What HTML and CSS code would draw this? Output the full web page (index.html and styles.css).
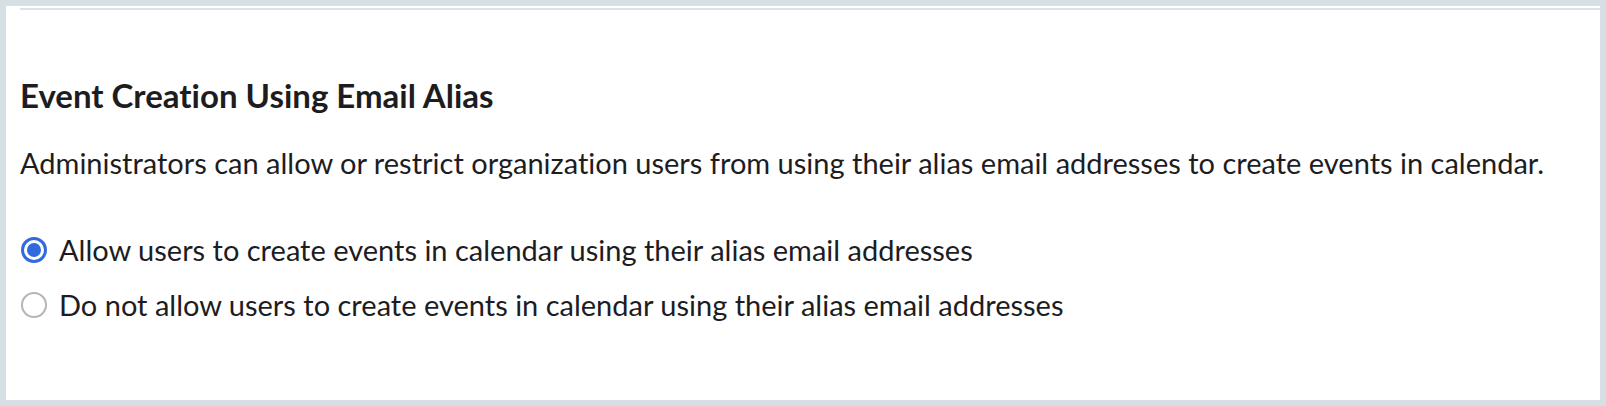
FILE: index.html
```html
<!DOCTYPE html>
<html lang="en">
<head>
<meta charset="utf-8">
<title>Event Creation Using Email Alias</title>
<link rel="stylesheet" href="styles.css">
</head>
<body>
<div class="frame">
  <section class="panel">
    <div class="divider"></div>
    <h2 class="title">Event Creation Using Email Alias</h2>
    <p class="desc">Administrators can allow or restrict organization users from using their alias email addresses to create events in calendar.</p>
    <div class="options">
      <label class="option">
        <input type="radio" name="alias" checked>
        <span class="radio"></span>
        <span class="label">Allow users to create events in calendar using their alias email addresses</span>
      </label>
      <label class="option">
        <input type="radio" name="alias">
        <span class="radio"></span>
        <span class="label">Do not allow users to create events in calendar using their alias email addresses</span>
      </label>
    </div>
  </section>
</div>
</body>
</html>
```

FILE: styles.css
```css
* { box-sizing: border-box; }

html, body {
  margin: 0;
  padding: 0;
  background: #d6dfe3;
}

body {
  font-family: Lato, "Noto Sans", sans-serif;
  font-variant-ligatures: none;
  color: #1d1d1f;
}

.frame {
  width: 1606px;
  height: 406px;
  padding: 6px;
}

.panel {
  background: #ffffff;
  height: 100%;
  padding: 2px 0 0 14px;
}

.divider {
  height: 2px;
  background: #dfe2e5;
}

.title {
  margin: 65px 0 0 0;
  font-size: 33px;
  font-weight: 700;
  line-height: 40px;
}

.desc {
  margin: 30px 0 0 0;
  font-size: 29px;
  line-height: 36px;
}

.options {
  margin-top: 51px;
  display: flex;
  flex-direction: column;
  gap: 19px;
}

.option {
  display: flex;
  align-items: center;
  gap: 12px;
  padding-left: 1px;
  font-size: 29px;
  line-height: 36px;
  cursor: pointer;
}

.option input {
  display: none;
}

.radio {
  width: 26px;
  height: 26px;
  border-radius: 50%;
  border: 2px solid #b3b5b8;
  background: #fff;
  flex: none;
  position: relative;
}

.option input:checked + .radio {
  border: 3px solid #3169df;
}

.option input:checked + .radio::after {
  content: "";
  position: absolute;
  left: 3px;
  top: 3px;
  width: 14px;
  height: 14px;
  border-radius: 50%;
  background: #3169df;
}
```
